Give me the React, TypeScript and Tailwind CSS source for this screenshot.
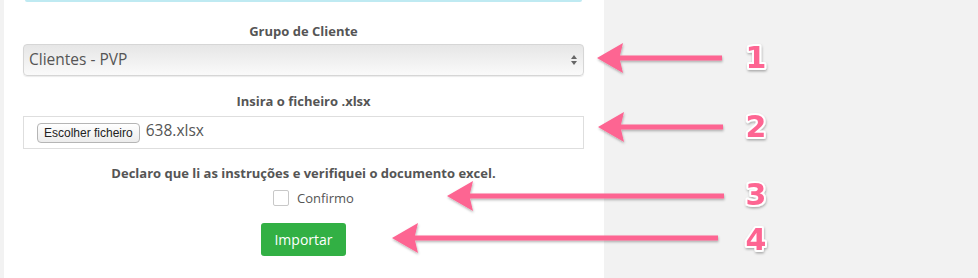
import React from "react";

const PINK = "#fd6592";

const arrows = [
    { tip: 597, y: 58, end: 722, label: "1", base: 68 },
    { tip: 598, y: 127, end: 723, label: "2", base: 137 },
    { tip: 447, y: 196, end: 724, label: "3", base: 205 },
    { tip: 392, y: 238, end: 718, label: "4", base: 250 },
];

const arrowPath = (tx: number, ty: number, ex: number) =>
    `M${tx},${ty} L${tx + 26},${ty - 15} L${tx + 23},${ty - 2.5} L${ex},${ty - 2.5} L${ex},${ty + 2.5} L${tx + 23},${ty + 2.5} L${tx + 26},${ty + 15} Z`;

const Annotations = () => (
    <svg
        className="absolute inset-0 pointer-events-none"
        width={978}
        height={278}
        viewBox="0 0 978 278"
    >
        <defs>
            <filter id="shadow" x="-10%" y="-50%" width="120%" height="200%">
                <feDropShadow dx="0.5" dy="1.5" stdDeviation="1" floodColor="#000" floodOpacity="0.3" />
            </filter>
        </defs>
        {arrows.map((a) => (
            <g key={a.label} filter="url(#shadow)">
                <path d={arrowPath(a.tip, a.y, a.end)} fill={PINK} strokeLinejoin="round" />
                <text
                    x={756}
                    y={a.base}
                    textAnchor="middle"
                    fontFamily="'DejaVu Sans', sans-serif"
                    fontWeight="bold"
                    fontSize="30"
                    fill={PINK}
                    stroke="#fff"
                    strokeWidth="4"
                    strokeLinejoin="round"
                    paintOrder="stroke"
                >
                    {a.label}
                </text>
            </g>
        ))}
    </svg>
);

const App = () => {
    return (
        <div
            className="relative flex w-[978px] h-[278px] bg-[#f2f2f2] overflow-hidden text-[#555]"
            style={{ fontFamily: "'Open Sans', sans-serif" }}
        >
            {/* Form panel */}
            <div className="ml-[4px] w-[600px] h-full bg-white pl-[19px] pr-[20px]">
                {/* bottom edge of the alert above */}
                <div className="mx-[2px] h-[2px] bg-[#bfeaf2] rounded-b-[3px]" />

                {/* Grupo de Cliente */}
                <div className="mt-[20px] text-center text-[13px] font-bold leading-[18px]">
                    Grupo de Cliente
                </div>
                <div className="mt-[4px] h-[32px] flex items-center justify-between px-[5px] rounded-[4px] border border-[#d6d6d6] bg-gradient-to-b from-[#e6e6e6] to-[#fafafa] shadow-[0_1px_1px_rgba(0,0,0,0.08)]">
                    <span className="text-[15.5px] text-[#555]">Clientes - PVP</span>
                    <span className="flex flex-col items-center gap-[2px] mr-[1px]">
                        <span className="w-0 h-0 border-l-[3px] border-r-[3px] border-b-[4px] border-l-transparent border-r-transparent border-b-[#666]" />
                        <span className="w-0 h-0 border-l-[3px] border-r-[3px] border-t-[4px] border-l-transparent border-r-transparent border-t-[#666]" />
                    </span>
                </div>

                {/* Ficheiro */}
                <div className="mt-[16px] text-center text-[13px] font-bold leading-[18px]">
                    Insira o ficheiro .xlsx
                </div>
                <div className="mt-[6px] h-[33px] flex items-center pl-[13px] border border-[#dedede] bg-white">
                    <span
                        className="h-[20px] px-[6px] flex items-center rounded-[4px] border border-[#b5b5b5] bg-gradient-to-b from-white to-[#ececec] text-[12px] text-[#222]"
                        style={{ fontFamily: "'Liberation Sans', sans-serif" }}
                    >
                        Escolher ficheiro
                    </span>
                    <span className="ml-[6px] text-[15.5px] text-[#555] -mt-[4px]">638.xlsx</span>
                </div>

                {/* Declaração */}
                <div className="mt-[15px] text-center text-[13px] font-bold leading-[18px]">
                    Declaro que li as instruções e verifiquei o documento excel.
                </div>
                <div className="mt-[7px] ml-[20px] flex items-center justify-center gap-[8px]">
                    <span className="w-[16px] h-[16px] border border-[#c8c8c8] rounded-[2px] bg-white" />
                    <span className="text-[13px] text-[#555] leading-[18px]">Confirmo</span>
                </div>

                {/* Importar */}
                <div className="mt-[16px] flex justify-center">
                    <button className="w-[85px] h-[33px] rounded-[3px] bg-[#32b044] text-white text-[14px] pb-[1px]">
                        Importar
                    </button>
                </div>
            </div>

            <Annotations />
        </div>
    );
};

export default App;
